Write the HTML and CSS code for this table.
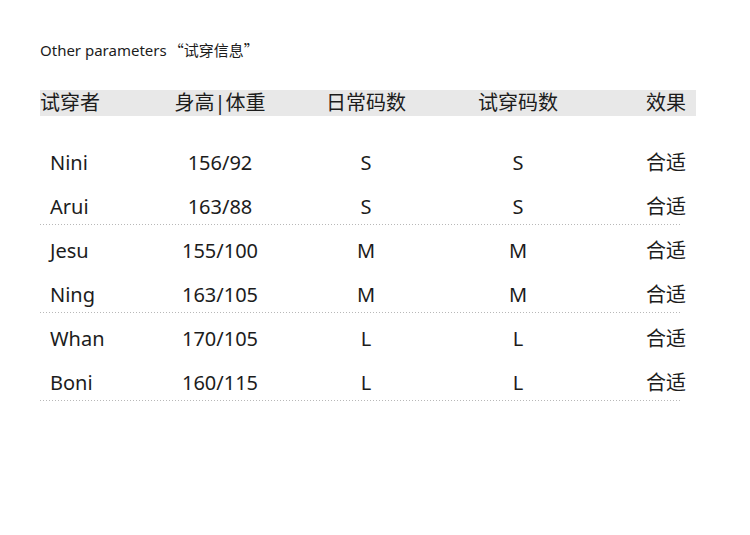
FILE: index.html
```html
<!DOCTYPE html>
<html lang="zh">
<head>
<meta charset="utf-8">
<title>Other parameters</title>
<link rel="stylesheet" href="styles.css">
</head>
<body>
<div class="page">
  <div class="title">Other parameters<span class="cjk">“试穿信息”</span></div>
  <div class="table">
    <div class="thead grid">
      <div class="c1">试穿者</div>
      <div class="c2">身高|体重</div>
      <div class="c3">日常码数</div>
      <div class="c4">试穿码数</div>
      <div class="c5">效果</div>
    </div>
    <div class="tbody">
      <div class="row grid">
        <div class="c1">Nini</div><div class="c2">156/92</div><div class="c3">S</div><div class="c4">S</div><div class="c5">合适</div>
      </div>
      <div class="row grid sep">
        <div class="c1">Arui</div><div class="c2">163/88</div><div class="c3">S</div><div class="c4">S</div><div class="c5">合适</div>
      </div>
      <div class="row grid">
        <div class="c1">Jesu</div><div class="c2">155/100</div><div class="c3">M</div><div class="c4">M</div><div class="c5">合适</div>
      </div>
      <div class="row grid sep">
        <div class="c1">Ning</div><div class="c2">163/105</div><div class="c3">M</div><div class="c4">M</div><div class="c5">合适</div>
      </div>
      <div class="row grid">
        <div class="c1">Whan</div><div class="c2">170/105</div><div class="c3">L</div><div class="c4">L</div><div class="c5">合适</div>
      </div>
      <div class="row grid sep">
        <div class="c1">Boni</div><div class="c2">160/115</div><div class="c3">L</div><div class="c4">L</div><div class="c5">合适</div>
      </div>
    </div>
  </div>
</div>
</body>
</html>
```

FILE: styles.css
```css
html, body {
  margin: 0;
  padding: 0;
  background: #ffffff;
}

body {
  font-family: "Noto Sans", "Noto Sans CJK SC", sans-serif;
  color: #1c1c1c;
}

.page {
  padding: 40px 0 0 40px;
}

.title {
  font-size: 15px;
  line-height: 20px;
  height: 20px;
}

.title .cjk {
  font-family: "Noto Sans CJK SC", sans-serif;
  margin-left: 2px;
}

.table {
  width: 656px;
  margin-top: 30px;
}

.grid {
  display: grid;
  grid-template-columns: 120px 120px 172px 132px 1fr;
  align-items: center;
}

.grid .c2,
.grid .c3,
.grid .c4 {
  text-align: center;
}

.grid .c5 {
  text-align: right;
  padding-right: 10px;
}

.thead {
  height: 26px;
  line-height: 26px;
  background: #e8e8e8;
  font-size: 20px;
}

.tbody {
  margin-top: 25px;
}

.row {
  height: 44px;
  line-height: 44px;
  font-size: 20px;
}

.row .c1 {
  padding-left: 10px;
}

.row.sep {
  background-image: repeating-linear-gradient(to right, #b8b8b8 0 1px, transparent 1px 3px);
  background-repeat: no-repeat;
  background-size: 642px 1px;
  background-position: 0 calc(100% - 4px);
}
```
